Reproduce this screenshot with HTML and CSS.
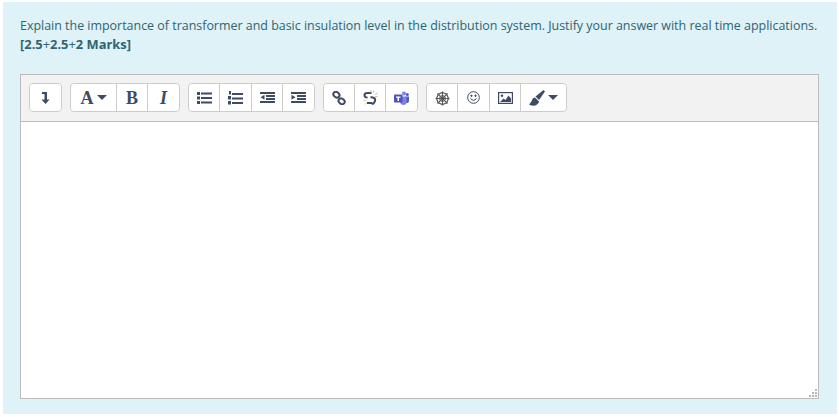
FILE: index.html
```html
<!DOCTYPE html>
<html lang="en">
<head>
<meta charset="utf-8">
<title>Question</title>
<link rel="stylesheet" href="styles.css">
</head>
<body>
<main class="panel">
  <p class="question">Explain the importance of transformer and basic insulation level in the distribution system. Justify your answer with real time applications.<br><strong>[2.5<span class="plus">+</span>2.5<span class="plus">+</span>2 Marks]</strong></p>
  <section class="editor">
    <div class="toolbar">
      <div class="group">
        <button class="btn btn-first btn-last"><svg width="9" height="12" viewBox="0 0 9 12"><path d="M1 0h5v7.500h2.500L4.500 12 .5 7.500H3.500V2H1z" fill="#3f4a63"/></svg></button>
      </div>
      <div class="group">
        <button class="btn btn-first btn-wide"><span class="serif">A</span><span class="caret"></span></button>
        <button class="btn"><span class="serif">B</span></button>
        <button class="btn btn-last"><span class="serif italic">I</span></button>
      </div>
      <div class="group">
        <button class="btn btn-first"><svg width="15" height="12" viewBox="0 0 15 12" fill="#3f4a63"><rect x="0" y="0" width="3" height="3"/><rect x="0" y="4.500" width="3" height="3"/><rect x="0" y="9" width="3" height="3"/><rect x="4" y="0.500" width="11" height="2"/><rect x="4" y="5" width="11" height="2"/><rect x="4" y="9.500" width="11" height="2"/></svg></button>
        <button class="btn btn-ol"><svg width="15" height="14" viewBox="0 0 15 14" fill="#3f4a63"><rect x="1" y="0" width="2" height="3.500"/><rect x="0" y="5" width="3" height="3.500"/><rect x="0" y="10" width="3" height="3.500"/><rect x="4" y="2" width="11" height="2"/><rect x="4" y="6.500" width="11" height="2"/><rect x="4" y="11" width="11" height="2"/></svg></button>
        <button class="btn"><svg width="15" height="11" viewBox="0 0 15 11" fill="#3f4a63"><rect x="0" y="0" width="15" height="2"/><rect x="6" y="3" width="9" height="2"/><rect x="6" y="6" width="9" height="2"/><rect x="0" y="9" width="15" height="2"/><path d="M4.500 2.800v5L0.500 5.300z"/></svg></button>
        <button class="btn btn-last"><svg width="15" height="11" viewBox="0 0 15 11" fill="#3f4a63"><rect x="0" y="0" width="15" height="2"/><rect x="6" y="3" width="9" height="2"/><rect x="6" y="6" width="9" height="2"/><rect x="0" y="9" width="15" height="2"/><path d="M0.500 2.800v5l4-2.500z"/></svg></button>
      </div>
      <div class="group">
        <button class="btn btn-first"><svg width="14" height="14" viewBox="0 0 14 14" fill="none" stroke="#3f4a63" stroke-width="2"><rect x="1.200" y="1.200" width="6.400" height="5" rx="2.500" transform="rotate(40 4.400 3.700)"/><rect x="6.400" y="7.800" width="6.400" height="5" rx="2.500" transform="rotate(40 9.600 10.300)"/></svg></button>
        <button class="btn"><svg width="15" height="15" viewBox="0 0 15 15" fill="none"><path d="M8.500 3H4.500Q1.500 3 1.500 5.300T4.500 7.500M7.500 7.500Q9 7 11 8T11.500 12 8.500 13H4" stroke="#3f4a63" stroke-width="2"/><path d="M8 0v2.500M11 .5l-1 2.500M14.500 3l-2.500 1.500M14.500 6.500H12M.5 11l2-.5M2 14.500l1.500-1.500" stroke="#e8b27a" stroke-width="1"/></svg></button>
        <button class="btn btn-last"><svg width="15" height="14" viewBox="0 0 15 14"><circle cx="10" cy="2.500" r="2" fill="#7b83eb"/><circle cx="13.300" cy="3.500" r="1.500" fill="#5059c9"/><path d="M11.500 5.500H15V10q0 2-2 2h-1.500z" fill="#5059c9"/><path d="M6 5.500h6.500v5.500q0 3-3 3T6 11z" fill="#7b83eb"/><rect x="0" y="3.500" width="8.500" height="8" rx="1" fill="#4b53bc"/><path d="M2 5.500h4.500v1.200H5V10H3.500V6.700H2z" fill="#fff"/></svg></button>
      </div>
      <div class="group">
        <button class="btn btn-first btn-web"><svg width="15" height="15" viewBox="0 0 15 15" fill="none" stroke="#5a5a5a"><path d="M7.500 .5v14M.5 7.500h14M2.500 2.500l10 10M12.500 2.500l-10 10" stroke-width="1.100"/><path d="M7.500 1.500 11.700 3.300 13.500 7.500 11.700 11.700 7.500 13.500 3.300 11.700 1.500 7.500 3.300 3.300z" stroke-width="1.200"/><path d="M7.500 4.500 9.600 5.400 10.500 7.500 9.600 9.600 7.500 10.500 5.400 9.600 4.500 7.500 5.400 5.400z" stroke-width="1"/></svg></button>
        <button class="btn btn-smile"><svg width="13" height="13" viewBox="0 0 13 13" fill="none" stroke="#3f4a63" stroke-width="1"><circle cx="6.500" cy="6.500" r="5.800"/><path d="M3.500 7.500Q6.500 11 9.500 7.500" /><circle cx="4.500" cy="4.800" r=".7" fill="#3f4a63"/><circle cx="8.500" cy="4.800" r=".7" fill="#3f4a63"/></svg></button>
        <button class="btn"><svg width="15" height="12" viewBox="0 0 15 12"><rect x=".6" y=".6" width="13.800" height="10.800" fill="none" stroke="#3f4a63" stroke-width="1.200"/><path d="M2 10l3.500-3.500 2 1.500L10.500 3.500 13 6.500V10z" fill="#3f4a63"/><circle cx="4" cy="3.700" r="1.200" fill="#3f4a63"/></svg></button>
        <button class="btn btn-last btn-brush"><svg width="16" height="16" viewBox="0 0 16 16" fill="#3f4a63"><path d="M14.500 0 6.500 6.500 10 10 16 1.500z"/><path d="M6 7.500Q3.500 7.500 3 10T0 14.500Q5 17 8 14.500T9.500 11z"/></svg><span class="caret"></span></button>
      </div>
    </div>
    <div class="content">
      <svg class="grip" width="9" height="9" viewBox="0 0 9 9" fill="#b5b5b5"><rect x="6" y="0" width="2" height="2"/><rect x="3" y="3" width="2" height="2"/><rect x="6" y="3" width="2" height="2"/><rect x="0" y="6" width="2" height="2"/><rect x="3" y="6" width="2" height="2"/><rect x="6" y="6" width="2" height="2"/></svg>
    </div>
  </section>
</main>
</body>
</html>
```
FILE: styles.css
```css
html, body { margin: 0; padding: 0; background: #fff; }
body { padding: 2px 2px 3px 3px; height: 417px; box-sizing: border-box; overflow: hidden; }
.panel {
  background: #def2f8;
  height: 412px;
  box-sizing: border-box;
  padding: 14px 17px 15px;
  display: flex;
  flex-direction: column;
  color: #2f6473;
  font-family: "Open Sans", sans-serif;
}
.question { margin: 0 0 20px; font-size: 12.450px; line-height: 19px; white-space: nowrap; }
.question strong { font-weight: 700; font-size: 12.900px; }
.plus { font-weight: 400; }
.editor {
  width: 799px;
  height: 325px;
  box-sizing: border-box;
  border: 1px solid #bbb;
  background: #fff;
  display: flex;
  flex-direction: column;
}
.toolbar {
  background: #f2f2f2;
  border-bottom: 1px solid #bbb;
  height: 47px;
  box-sizing: border-box;
  padding: 8px 8px 0;
  display: flex;
  gap: 8px;
  align-items: flex-start;
}
.group {
  display: flex;
  background: #fff;
  border: 1px solid #ccc;
  border-radius: 4px;
  height: 29px;
  box-sizing: border-box;
}
.btn {
  width: 31px;
  height: 27px;
  padding: 0;
  border: 0;
  border-right: 1px solid #ccc;
  background: #fff;
  display: flex;
  align-items: center;
  justify-content: center;
  gap: 3px;
  box-sizing: border-box;
}
.btn-first { border-radius: 4px 0 0 4px; }
.btn-last { border-right: 0; border-radius: 0 4px 4px 0; }
.btn-first.btn-last { border-radius: 4px; }
.btn-wide { width: 46px; }
.btn-ol, .btn-smile { width: 32px; }
.btn-brush { width: 45px; }
.btn-web svg { margin-top: 2px; }
.serif { font-family: "Liberation Serif", serif; font-weight: 700; font-size: 18px; line-height: 1; color: #3f4a63; }
.italic { font-style: italic; }
.caret { width: 0; height: 0; border-left: 5px solid transparent; border-right: 5px solid transparent; border-top: 5px solid #3f4a63; }
.content { flex: 1; position: relative; }
.grip { position: absolute; right: 0; bottom: 0; }
```
